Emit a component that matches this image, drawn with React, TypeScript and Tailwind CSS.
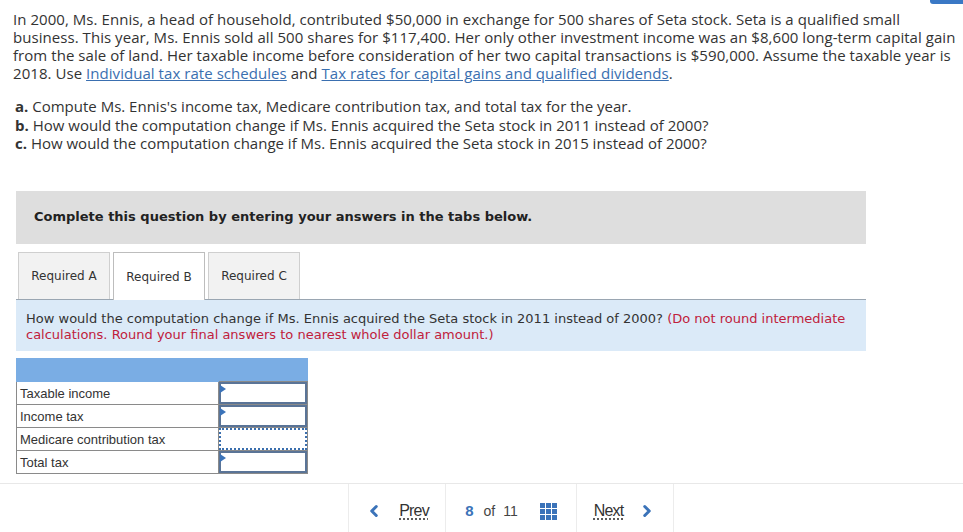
import { ChevronLeft, ChevronRight } from 'lucide-react'

const rows = [
  { label: 'Taxable income', kind: 'input' },
  { label: 'Income tax', kind: 'input' },
  { label: 'Medicare contribution tax', kind: 'dotted' },
  { label: 'Total tax', kind: 'input' },
]

function GridIcon() {
  return (
    <svg width="17" height="17" viewBox="0 0 17 17">
      {[0, 6, 12].map((y) =>
        [0, 6, 12].map((x) => <rect key={`${x}-${y}`} x={x} y={y} width="5" height="5" fill="#3b73b9" />)
      )}
    </svg>
  )
}

export default function App() {
  return (
    <div className="relative w-[963px] h-[532px] bg-white overflow-hidden">
      {/* aba azul no canto */}
      <div className="absolute top-0 right-0 w-[33px] h-[4px] bg-[#3a78c5] rounded-bl-[3px]" />

      <div className="px-[13px] pt-[10px] text-[15px] leading-[18px] text-[#333] font-['Open_Sans',sans-serif] whitespace-nowrap">
        <p className="tracking-[0.05px]">
          In 2000, Ms. Ennis, a head of household, contributed $50,000 in exchange for 500 shares of Seta stock. Seta is a qualified small
          <br />
          business. This year, Ms. Ennis sold all 500 shares for $117,400. Her only other investment income was an $8,600 long-term capital gain
          <br />
          from the sale of land. Her taxable income before consideration of her two capital transactions is $590,000. Assume the taxable year is
          <br />
          2018. Use <span className="text-[#3a6fb0] underline">Individual tax rate schedules</span> and{' '}
          <span className="text-[#3a6fb0] underline">Tax rates for capital gains and qualified dividends</span>.
        </p>
        <div className="mt-[15px] pl-[2px] leading-[18.5px]">
          <p><b>a.</b> Compute Ms. Ennis's income tax, Medicare contribution tax, and total tax for the year.</p>
          <p><b>b.</b> How would the computation change if Ms. Ennis acquired the Seta stock in 2011 instead of 2000?</p>
          <p><b>c.</b> How would the computation change if Ms. Ennis acquired the Seta stock in 2015 instead of 2000?</p>
        </div>
      </div>

      <div className="ml-[16px] w-[850px] mt-[38px] font-['DejaVu_Sans',Verdana,sans-serif]">
        <div className="h-[53px] bg-[#dedede] flex items-center pl-[18px] text-[13px] font-bold text-[#222]">
          Complete this question by entering your answers in the tabs below.
        </div>

        <div className="mt-[8px] flex gap-[3px] pl-[2px] text-[12px] text-[#333]">
          <div className="w-[92px] h-[47px] pt-[1px] bg-[#f2f2f2] border border-[#cfcfcf] border-b-0 flex items-center justify-center">Required A</div>
          <div className="w-[92px] h-[48px] pt-[1px] -mb-[1px] bg-white border border-[#bdbdbd] border-b-0 flex items-center justify-center relative z-10">Required B</div>
          <div className="w-[92px] h-[47px] pt-[1px] bg-[#f2f2f2] border border-[#cfcfcf] border-b-0 flex items-center justify-center">Required C</div>
        </div>

        <div className="h-[52px] bg-[#dbeaf8] border-t border-[#9aa6b2] px-[10px] pt-[11px] text-[13px] leading-[16px] text-[#333]">
          How would the computation change if Ms. Ennis acquired the Seta stock in 2011 instead of 2000?{' '}
          <span className="text-[#c0213c]">(Do not round intermediate calculations. Round your final answers to nearest whole dollar amount.)</span>
        </div>

        <table className="mt-[7px] border-collapse font-['Liberation_Sans',Arial,sans-serif] text-[13px] text-[#333]">
          <tbody>
            <tr className="h-[23px]">
              <td className="w-[202px] bg-[#7aade4] border border-[#7aade4]" />
              <td className="w-[89px] bg-[#7aade4] border-l border-[#5f7fa5]" />
            </tr>
            {rows.map((r) => (
              <tr key={r.label} className="h-[23px]">
                <td className="border border-[#8a8a8a] pl-[3px] pt-[2px]">{r.label}</td>
                <td className="p-0 border border-[#8a8a8a]">
                  {r.kind === 'input' ? (
                    <div className="relative h-[22px] border-2 border-[#5a7497] bg-white">
                      <div className="absolute -left-[1px] top-[1px] w-0 h-0 border-y-[4px] border-y-transparent border-l-[6px] border-l-[#3b73b9]" />
                    </div>
                  ) : (
                    <div className="h-[22px] border-2 border-dotted border-[#3b6fae] bg-white" />
                  )}
                </td>
              </tr>
            ))}
          </tbody>
        </table>
      </div>

      <div className="absolute left-0 right-0 top-[483px] h-[49px] border-t border-[#e8e8e8] flex justify-center font-['Liberation_Sans',Arial,sans-serif]">
        <div className="flex h-full pl-[59px]">
          <div className="w-[98px] pt-[6px] border-l border-r border-[#ececec] flex items-center justify-center gap-[16px] text-[16px] text-[#333]">
            <ChevronLeft className="w-[18px] h-[18px] text-[#3b73b9]" strokeWidth={4} />
            <span className="underline decoration-dotted underline-offset-[3px] tracking-[-0.8px]">Prev</span>
          </div>
          <div className="w-[131px] pt-[6px] border-r border-[#ececec] flex items-center justify-center text-[14px] text-[#444]">
            <b className="text-[#3b73b9] text-[15px] mr-[10px]">8</b>
            <span className="mr-[8px]">of</span>
            <span className="mr-[22px]">11</span>
            <GridIcon />
          </div>
          <div className="w-[97px] pt-[6px] border-r border-[#ececec] flex items-center justify-center gap-[15px] text-[16px] text-[#333]">
            <span className="underline decoration-dotted underline-offset-[3px] tracking-[-0.8px]">Next</span>
            <ChevronRight className="w-[18px] h-[18px] text-[#3b73b9]" strokeWidth={4} />
          </div>
        </div>
      </div>
    </div>
  )
}
